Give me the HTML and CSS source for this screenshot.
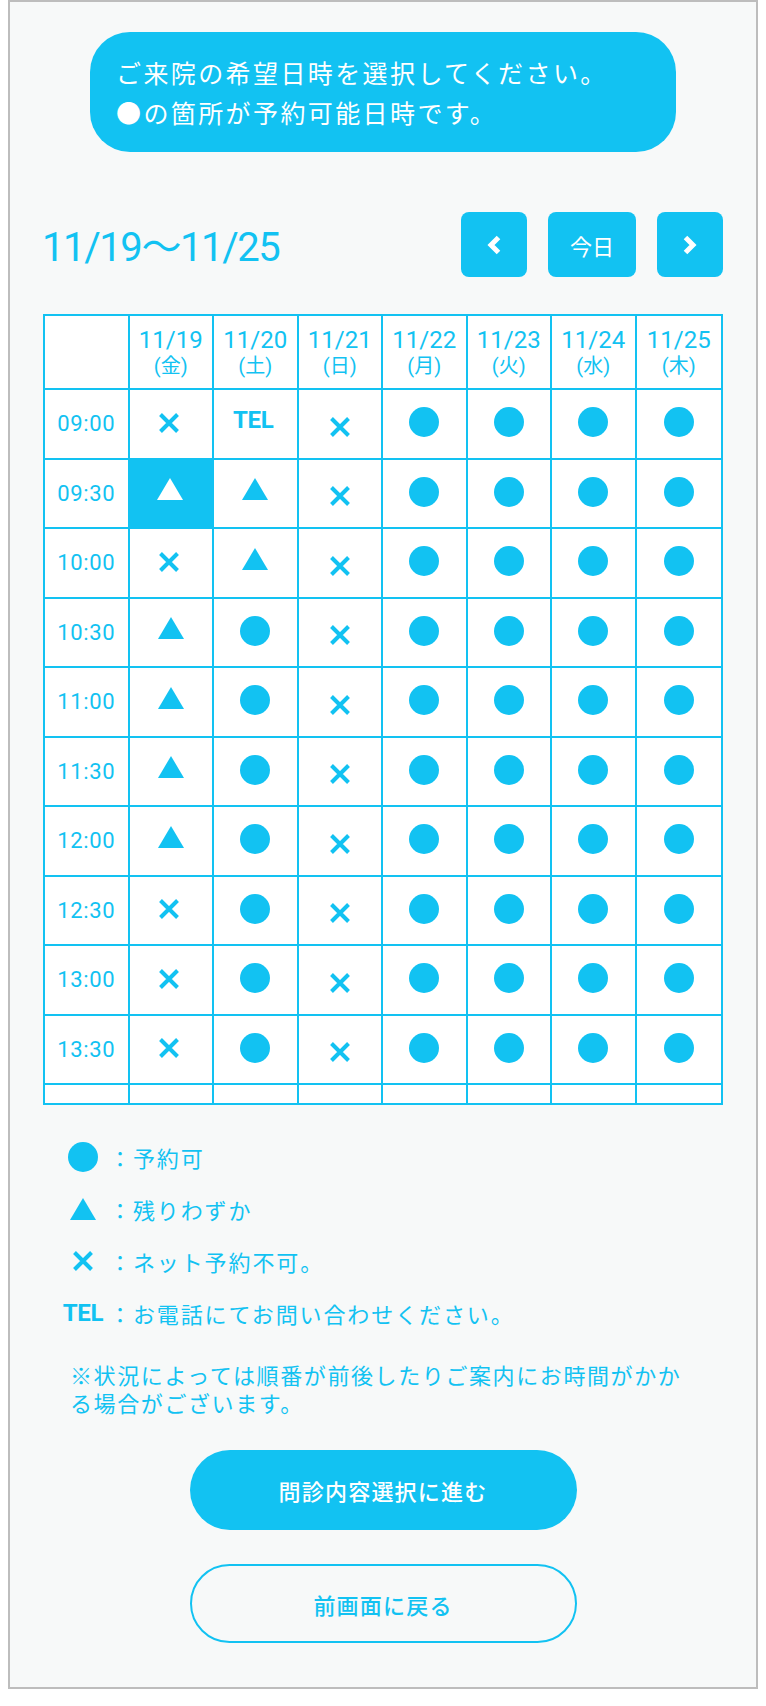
FILE: index.html
```html
<!DOCTYPE html>
<html lang="ja">
<head>
<meta charset="utf-8">
<title>予約日時選択</title>
<link rel="stylesheet" href="styles.css">
</head>
<body>
<div class="card">
  <div class="bubble">
    <p>ご来院の希望日時を選択してください。</p>
    <p>●の箇所が予約可能日時です。</p>
  </div>

  <div class="nav">
    <h2 class="range">11/19〜11/25</h2>
    <div class="nav-btns">
      <button class="nb arrow" aria-label="前へ"><svg width="16" height="20" viewBox="0 0 16 20"><path d="M12.5 2.5 L5 10 L12.5 17.5" fill="none" stroke="#fff" stroke-width="5"/></svg></button>
      <button class="nb today">今日</button>
      <button class="nb arrow" aria-label="次へ"><svg width="16" height="20" viewBox="0 0 16 20"><path d="M3.5 2.5 L11 10 L3.5 17.5" fill="none" stroke="#fff" stroke-width="5"/></svg></button>
    </div>
  </div>

  <div class="table-wrap">
    <div class="grid">
      <div class="c head"></div>
      <div class="c head"><span class="d">11/19</span><span class="w">(金)</span></div>
      <div class="c head"><span class="d">11/20</span><span class="w">(土)</span></div>
      <div class="c head"><span class="d">11/21</span><span class="w">(日)</span></div>
      <div class="c head"><span class="d">11/22</span><span class="w">(月)</span></div>
      <div class="c head"><span class="d">11/23</span><span class="w">(火)</span></div>
      <div class="c head"><span class="d">11/24</span><span class="w">(水)</span></div>
      <div class="c head"><span class="d">11/25</span><span class="w">(木)</span></div>
    </div>
  </div>

  <ul class="legend">
    <li><span class="lg-icon"><span class="dot"></span></span><span class="lg-text">：予約可</span></li>
    <li><span class="lg-icon"><svg class="tri" width="26" height="22" viewBox="0 0 26 22"><polygon points="13,0 26,22 0,22" fill="#12c2f2"/></svg></span><span class="lg-text">：残りわずか</span></li>
    <li><span class="lg-icon"><svg class="x" width="22" height="22" viewBox="0 0 22 22"><path d="M2.5 2.5 L19.5 19.5 M19.5 2.5 L2.5 19.5" stroke="#12c2f2" stroke-width="4"/></svg></span><span class="lg-text">：ネット予約不可。</span></li>
    <li><span class="lg-icon"><span class="tel">TEL</span></span><span class="lg-text">：お電話にてお問い合わせください。</span></li>
  </ul>

  <p class="note">※状況によっては順番が前後したりご案内にお時間がかかる場合がございます。</p>

  <button class="btn primary">問診内容選択に進む</button>
  <button class="btn secondary">前画面に戻る</button>
</div>

<script src="app.js"></script>
</body>
</html>
```

FILE: app.js
```js
(function () {
  var rows = [
    ["09:00", "x", "tel", "x2", "o", "o", "o", "o"],
    ["09:30", "tsel", "t", "x2", "o", "o", "o", "o"],
    ["10:00", "x", "t", "x2", "o", "o", "o", "o"],
    ["10:30", "t", "o", "x2", "o", "o", "o", "o"],
    ["11:00", "t", "o", "x2", "o", "o", "o", "o"],
    ["11:30", "t", "o", "x2", "o", "o", "o", "o"],
    ["12:00", "t", "o", "x2", "o", "o", "o", "o"],
    ["12:30", "x", "o", "x2", "o", "o", "o", "o"],
    ["13:00", "x", "o", "x2", "o", "o", "o", "o"],
    ["13:30", "x", "o", "x2", "o", "o", "o", "o"],
    ["", "", "", "", "", "", "", ""]
  ];
  var X = '<svg class="x" width="22" height="22" viewBox="0 0 22 22"><path d="M2.5 2.5 L19.5 19.5 M19.5 2.5 L2.5 19.5" stroke="#12c2f2" stroke-width="4"/></svg>';
  function tri(color) {
    return '<svg class="tri" width="26" height="22" viewBox="0 0 26 22"><polygon points="13,0 26,22 0,22" fill="' + color + '"/></svg>';
  }
  var grid = document.querySelector('.grid');
  var html = '';
  rows.forEach(function (r) {
    r.forEach(function (v, i) {
      if (i === 0) {
        html += '<div class="c time">' + v + '</div>';
        return;
      }
      var cls = 'c';
      var inner = '';
      if (v === 'x') { inner = X; cls += ' xc'; }
      else if (v === 'x2') { inner = X; cls += ' low'; }
      else if (v === 'o') inner = '<span class="dot"></span>';
      else if (v === 't') inner = tri('#12c2f2');
      else if (v === 'tsel') { inner = tri('#ffffff'); cls += ' sel'; }
      else if (v === 'tel') inner = '<span class="tel">TEL</span>';
      html += '<div class="' + cls + '">' + inner + '</div>';
    });
  });
  grid.insertAdjacentHTML('beforeend', html);
})();
```

FILE: styles.css
```css
* { box-sizing: border-box; }

html, body {
  background: #ffffff;
}

body {
  margin: 0 8px;
  font-family: Roboto, "Noto Sans CJK JP", sans-serif;
  color: #12c2f2;
}

.card {
  width: 750px;
  background: #f7f9f9;
  border: 2px solid #bdbdbd;
  box-shadow: 2px 5px 8px rgba(0, 0, 0, 0.25);
  display: flex;
  flex-direction: column;
  align-items: center;
  padding-bottom: 44px;
}

.bubble {
  margin-top: 30px;
  width: 586px;
  height: 120px;
  border-radius: 40px;
  background: #12c2f2;
  color: #ffffff;
  padding: 20px 26px;
  font-family: "Noto Sans CJK JP", sans-serif;
  font-size: 25px;
  letter-spacing: 2.4px;
  line-height: 40px;
}

.bubble p { margin: 0; white-space: nowrap; }

.nav {
  margin-top: 60px;
  width: 680px;
  height: 65px;
  display: flex;
  align-items: center;
  justify-content: space-between;
}

.range {
  margin: 6px 0 0 -1px;
  font-size: 40px;
  font-weight: 400;
  line-height: 50px;
  color: #12c2f2;
  letter-spacing: -1.4px;
}

.nav-btns {
  display: flex;
  gap: 21px;
}

.nb {
  height: 65px;
  border: 0;
  border-radius: 8px;
  background: #12c2f2;
  color: #ffffff;
  display: flex;
  align-items: center;
  justify-content: center;
  padding: 0;
  font-family: "Noto Sans CJK JP", sans-serif;
}

.nb.arrow { width: 66px; }
.nb.today { width: 88px; font-size: 22px; }

.table-wrap {
  margin-top: 37px;
  width: 680px;
  height: 791px;
  border: 2px solid #12c2f2;
  background: #ffffff;
  overflow: hidden;
}

.grid {
  display: grid;
  grid-template-columns: repeat(8, 1fr);
  grid-template-rows: 74px repeat(11, 69.5px);
}

.c {
  border-right: 2px solid #12c2f2;
  border-bottom: 2px solid #12c2f2;
  display: flex;
  align-items: center;
  justify-content: center;
  background: #ffffff;
}

.c:nth-child(8n) { border-right: 0; }

.head {
  flex-direction: column;
  line-height: 26px;
  padding-top: 1px;
}

.head .d { font-size: 24px; }
.head .w { font-size: 20px; }

.time { font-size: 22px; letter-spacing: 0.6px; }

.dot {
  display: block;
  width: 30px;
  height: 30px;
  border-radius: 50%;
  background: #12c2f2;
}

.c .dot { margin-bottom: 3px; }

.c .tri { margin-bottom: 8px; }

.c .x { display: block; margin-bottom: 2px; }
.c.xc .x { margin-right: 4px; }
.c.low .x { margin: 6px 0 0 0; }

.c.sel { background: #12c2f2; margin: 0 0 0 -2px; }

.tel {
  font-size: 24px;
  font-weight: 700;
  color: #12c2f2;
  letter-spacing: -0.3px;
}

.c .tel { margin: 0 4px 8px 0; }

.legend {
  list-style: none;
  margin: 26px 0 0 0;
  padding: 0;
  width: 640px;
  font-family: Roboto, "Noto Sans CJK JP", sans-serif;
}

.legend li {
  height: 52px;
  display: flex;
  align-items: center;
}

.lg-icon {
  width: 40px;
  display: flex;
  justify-content: center;
  align-items: center;
}

.lg-text {
  margin-left: 6px;
  font-family: "Noto Sans CJK JP", sans-serif;
  font-size: 22px;
  letter-spacing: 1.9px;
}

.note {
  margin: 21px 0 0 0;
  width: 626px;
  font-family: "Noto Sans CJK JP", sans-serif;
  font-size: 22px;
  line-height: 28px;
  letter-spacing: 1.6px;
  color: #12c2f2;
}

.btn {
  width: 387px;
  height: 80px;
  border-radius: 40px;
  font-family: "Noto Sans CJK JP", sans-serif;
  font-size: 22px;
  font-weight: 500;
  letter-spacing: 1.2px;
  padding: 0;
}

.btn.primary {
  margin-top: 34px;
  background: #12c2f2;
  border: 0;
  color: #ffffff;
}

.btn.secondary {
  margin-top: 34px;
  height: 79px;
  background: transparent;
  border: 2px solid #12c2f2;
  color: #12c2f2;
}
```
